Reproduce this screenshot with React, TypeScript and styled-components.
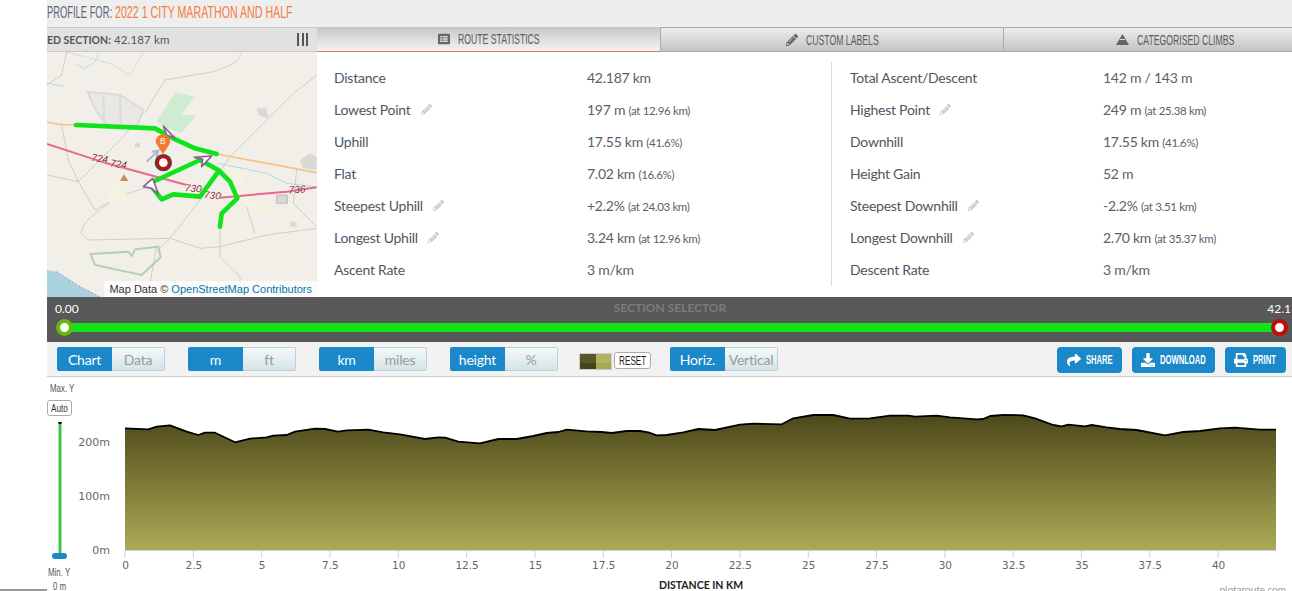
import React from 'react';
import styled, { createGlobalStyle } from 'styled-components';
import { FaListAlt, FaPencilAlt, FaShare, FaDownload, FaPrint } from 'react-icons/fa';

const GlobalStyle = createGlobalStyle`
  html, body {
    margin: 0;
    padding: 0;
    background: #fff;
    overflow: hidden;
  }
  * {
    box-sizing: border-box;
  }
`;

// no condensed family is installed, so the narrow headings are squeezed to their width
const Squeezed = styled.span<{ $w: number; $k: number }>`
  display: inline-block;
  width: ${({ $w }) => $w}px;
  flex: none;
  font-family: "Liberation Sans", sans-serif;
  white-space: nowrap;
  transform-origin: left center;
  transform: scaleX(${({ $k }) => $k});
`;

const Page = styled.div`
  display: flex;
  width: 1292px;
  height: 591px;
  overflow: hidden;
  font-family: Lato, sans-serif;
  color: #555;
`;

const Gutter = styled.div`
  width: 47px;
  flex: none;
  display: flex;
  flex-direction: column;
  justify-content: flex-end;
`;

const GutterRule = styled.div`
  height: 2px;
  background: #999;
`;

const Main = styled.div`
  flex: 1;
  min-width: 0;
  display: flex;
  flex-direction: column;
  overflow: hidden;
`;

const TitleBar = styled.div`
  height: 27px;
  flex: none;
  display: flex;
  align-items: center;
  gap: 3px;
  padding-bottom: 1px;
  background: #eee;
  font-size: 16px;
  color: #5c6470;
`;

const RouteName = styled.span`
  color: #f47c3c;
`;

const TopRow = styled.div`
  display: flex;
  height: 270px;
  flex: none;
`;

const MapPanel = styled.div`
  width: 270px;
  flex: none;
  display: flex;
  flex-direction: column;
`;

const MapHeader = styled.div`
  height: 25px;
  flex: none;
  display: flex;
  align-items: center;
  justify-content: space-between;
  padding-right: 9px;
  background: #e1e1e1;
  border-top: 1px solid #c8c8c8;
  border-bottom: 1px solid #c8c8c8;
  font-size: 11.5px;
  letter-spacing: 0.15px;
  white-space: nowrap;
`;

const MapHeaderKey = styled.b`
  font-size: 10.5px;
  font-weight: 700;
  letter-spacing: 0;
`;

const MapBars = styled.div`
  display: flex;
  gap: 2.5px;
`;

const MapBar = styled.span`
  width: 2px;
  height: 13px;
  background: #555;
`;

const MapCanvas = styled.div`
  position: relative;
  height: 245px;
  flex: none;
  overflow: hidden;
  background: #f2efe9;
  svg {
    display: block;
  }
`;

const Attribution = styled.div`
  position: absolute;
  right: 0;
  bottom: 0;
  height: 16px;
  padding: 0 5px;
  background: rgba(255, 255, 255, 0.75);
  font-family: "Liberation Sans", sans-serif;
  font-size: 11px;
  line-height: 16px;
  color: #333;
  white-space: nowrap;
`;

const OsmLink = styled.span`
  color: #0078a8;
`;

const RightPanel = styled.div`
  flex: 1;
  min-width: 0;
  display: flex;
  flex-direction: column;
`;

const Tabs = styled.div`
  height: 25px;
  flex: none;
  display: grid;
  grid-template-columns: repeat(3, 343px);
`;

const Tab = styled.div<{ $active?: boolean }>`
  display: flex;
  align-items: center;
  justify-content: center;
  gap: 8px;
  font-size: 14px;
  color: #5c5c5c;
  background: ${({ $active }) =>
    $active ? 'linear-gradient(#c6c6c6, #f4f4f4)' : 'linear-gradient(#ececec, #c4c4c4)'};
  border-top: ${({ $active }) => ($active ? 'none' : '1px solid #aaa')};
  border-left: ${({ $active }) => ($active ? 'none' : '1px solid #aaa')};
  border-bottom: ${({ $active }) => ($active ? '1px solid #e47a3a' : '1px solid #aaa')};
  svg {
    font-size: 12px;
    color: #666;
    flex: none;
  }
`;

const StatsBody = styled.div`
  height: 245px;
  flex: none;
  display: grid;
  grid-template-columns: 514px 1fr;
  padding-top: 10px;
`;

const StatsColumn = styled.div<{ $divided?: boolean }>`
  height: 224px;
  padding-left: ${({ $divided }) => ($divided ? '18px' : '17px')};
  border-left: ${({ $divided }) => ($divided ? '1px solid #ddd' : 'none')};
`;

const StatRow = styled.div`
  display: grid;
  grid-template-columns: 253px 1fr;
  height: 32px;
  padding-bottom: 2px;
  align-items: center;
  font-size: 14px;
  letter-spacing: -0.25px;
  white-space: nowrap;
`;

const StatLabel = styled.div`
  display: flex;
  align-items: center;
  gap: 10px;
  color: #4f5660;
  svg {
    font-size: 11px;
    color: #ccc;
  }
`;

const StatValue = styled.div`
  color: #5a5f68;
`;

const StatNote = styled.small`
  font-size: 11.5px;
  letter-spacing: -0.35px;
`;

const Selector = styled.div`
  height: 45px;
  flex: none;
  background: #585858;
  padding: 4px 13px 0 8px;
`;

const SelectorLabels = styled.div`
  display: grid;
  grid-template-columns: 1fr auto 1fr;
  height: 15px;
  align-items: center;
  font-size: 12px;
  color: #fff;
`;

const SelectorTitle = styled.div`
  font-size: 12px;
  font-weight: 700;
  color: #7c7c7c;
  transform: translate(3px, -1px);
`;

const SelectorEnd = styled.div`
  justify-self: end;
  margin-right: -12px;
  white-space: nowrap;
`;

const Track = styled.div`
  position: relative;
  height: 8.5px;
  margin: 7px 0 0 10px;
  background: #10e318;
`;

const Handle = styled.span<{ $end?: boolean }>`
  position: absolute;
  top: -4px;
  ${({ $end }) => ($end ? 'right: -9px;' : 'left: -9px;')}
  width: 17px;
  height: 17px;
  border-radius: 50%;
  background: #fff;
  border: 4px solid ${({ $end }) => ($end ? '#c20a0a' : '#69b80a')};
`;

const Toolbar = styled.div`
  height: 35px;
  flex: none;
  display: flex;
  align-items: flex-start;
  padding: 5px 6px 0 10px;
  background: #f2f2f2;
  border-bottom: 1px solid #ccc;
`;

const Toggle = styled.div<{ $gap?: number }>`
  display: flex;
  height: 24px;
  width: 108px;
  flex: none;
  margin-right: ${({ $gap }) => $gap ?? 23}px;
  border-radius: 2px;
  overflow: hidden;
  font-size: 14px;
  letter-spacing: -0.2px;
`;

const ToggleItem = styled.div<{ $on?: boolean }>`
  flex: ${({ $on }) => ($on ? '0 0 55px' : '1')};
  display: flex;
  align-items: center;
  justify-content: center;
  color: ${({ $on }) => ($on ? '#fff' : '#9a9a9a')};
  background: ${({ $on }) => ($on ? '#1b88c9' : 'linear-gradient(#f4f8f9, #d3e4e8)')};
  border: ${({ $on }) => ($on ? 'none' : '1px solid #b9d2da')};
  border-left: none;
`;

const Swatches = styled.div`
  display: flex;
  width: 33px;
  height: 17px;
  margin-top: 6px;
  flex: none;
  border: 1px solid #ccc;
`;

const Swatch = styled.span<{ $top: string; $bottom: string }>`
  flex: 1;
  background: linear-gradient(${({ $top }) => $top} 60%, ${({ $bottom }) => $bottom} 60%);
`;

const ResetButton = styled.div`
  width: 37px;
  height: 17px;
  margin: 5px 19px 0 2px;
  flex: none;
  display: flex;
  align-items: center;
  justify-content: center;
  background: #fff;
  border: 1px solid #aaa;
  border-radius: 3px;
  font-size: 13px;
  color: #222;
`;

const Actions = styled.div`
  margin-left: auto;
  display: flex;
  gap: 10px;
`;

const ActionButton = styled.div<{ $width: number }>`
  width: ${({ $width }) => $width}px;
  height: 26px;
  display: flex;
  align-items: center;
  justify-content: center;
  gap: 5px;
  border-radius: 4px;
  background: #1b88c9;
  color: #fff;
  font-size: 12.5px;
  font-weight: 700;
  svg {
    font-size: 14px;
    flex: none;
  }
`;

const ChartRow = styled.div`
  flex: 1;
  min-height: 0;
  display: flex;
  svg {
    display: block;
  }
`;

const YPanel = styled.div`
  width: 28px;
  flex: none;
  display: flex;
  flex-direction: column;
  align-items: center;
  font-size: 10.5px;
  line-height: 12px;
  color: #555;
  padding-top: 5px;
`;

const AutoButton = styled.div`
  width: 25px;
  height: 16px;
  margin: 6px 0 0 -3px;
  flex: none;
  display: flex;
  align-items: center;
  justify-content: center;
  background: #fff;
  border: 1px solid #aaa;
  border-radius: 3px;
  color: #333;
`;

const YTrack = styled.div`
  position: relative;
  width: 4px;
  height: 134px;
  margin: 6px 0 0 -3px;
  flex: none;
  background: #11df1b;
  border-left: 1px solid #ccc;
  border-right: 1px solid #ccc;
  border-top: 2px solid #000;
`;

const YKnob = styled.span`
  position: absolute;
  left: -7px;
  bottom: -3px;
  width: 15px;
  height: 6px;
  border-radius: 3px;
  background: #1b88c9;
`;

const YFoot = styled.div`
  margin: 10px 0 0 -3px;
  flex: none;
`;

const YFootValue = styled.div`
  margin: 2px 0 0 -3px;
  flex: none;
`;

const leftStats = [
  { label: 'Distance', value: '42.187 km' },
  { label: 'Lowest Point', value: '197 m', note: '(at 12.96 km)', edit: true },
  { label: 'Uphill', value: '17.55 km', note: '(41.6%)' },
  { label: 'Flat', value: '7.02 km', note: '(16.6%)' },
  { label: 'Steepest Uphill', value: '+2.2%', note: '(at 24.03 km)', edit: true },
  { label: 'Longest Uphill', value: '3.24 km', note: '(at 12.96 km)', edit: true },
  { label: 'Ascent Rate', value: '3 m/km' },
];

const rightStats = [
  { label: 'Total Ascent/Descent', value: '142 m / 143 m' },
  { label: 'Highest Point', value: '249 m', note: '(at 25.38 km)', edit: true },
  { label: 'Downhill', value: '17.55 km', note: '(41.6%)' },
  { label: 'Height Gain', value: '52 m' },
  { label: 'Steepest Downhill', value: '-2.2%', note: '(at 3.51 km)', edit: true },
  { label: 'Longest Downhill', value: '2.70 km', note: '(at 35.37 km)', edit: true },
  { label: 'Descent Rate', value: '3 m/km' },
];

const elevation = `125,428.3 148.3,429.3 156.7,426.7 170,425.3 186.7,431.7 198.3,435 205,432.7 215,432.7 235,442.3
 250,438.7 266.7,437.3 273.3,435.7 286.7,435 295,431.7 315,428.7 325,429 338,431.7 346.7,430.3 368.3,429.7 383.3,432.3
 400,434.3 425,439 438.3,437.3 445,437.7 458.3,441.7 480,443.3 498.3,439 516.7,439 533.3,436 546.7,433 558.3,432
 566.7,429.7 586.7,431.3 601.7,432 611.7,433 626.7,431 640,431 648.3,432.3 656.7,435.3 666.7,435 683.3,432.3 698.3,429
 715,430 740,424.7 753.3,423.7 781.7,424.3 793.3,418.3 813.3,415 833.3,415 850,418.6 870,418.3 890,415.7 908.3,415.7
 915,416.7 936.7,415.7 950,417.3 976.7,419.3 983.3,419 990,416 1003.3,415 1023.3,415.3 1035,418.3 1053.3,425
 1061.7,426.3 1068.3,424.7 1085,426.3 1091.7,425 1106.7,427.3 1120,429 1136.7,430 1165,435.3 1183.3,432 1200,431
 1220,428.3 1235,427.7 1260,429.7 1276,429.7`;

const ticks = ['0', '2.5', '5', '7.5', '10', '12.5', '15', '17.5', '20', '22.5', '25', '27.5', '30', '32.5', '35', '37.5', '40'];

const ElevationChart = () => (
  <svg width="1217" height="214" viewBox="75 377 1217 214">
    <defs>
      <linearGradient id="elev" x1="0" y1="415" x2="0" y2="550" gradientUnits="userSpaceOnUse">
        <stop offset="0" stopColor="#4d481a" />
        <stop offset="1" stopColor="#abaa55" />
      </linearGradient>
    </defs>
    <polygon points={`125,550 ${elevation} 1276,550`} fill="url(#elev)" />
    <polyline points={elevation} fill="none" stroke="#000" strokeWidth="1.8" strokeLinejoin="round" />
    <line x1="125" y1="550.5" x2="1276" y2="550.5" stroke="#c3d2e6" />
    <g fontFamily="DejaVu Sans, sans-serif" fontSize="11" fill="#666" textAnchor="end">
      <text x="110" y="446">200m</text>
      <text x="110" y="500">100m</text>
      <text x="110" y="554">0m</text>
    </g>
    {ticks.map((t, i) => {
      const x = 125 + i * 68.32;
      return (
        <g key={t}>
          <line x1={x} y1="550" x2={x} y2="558" stroke="#c3d2e6" />
          <text
            x={x + 0.5}
            y="569"
            fontFamily="DejaVu Sans, sans-serif"
            fontSize="10.5"
            fill="#666"
            textAnchor="middle"
          >
            {t}
          </text>
        </g>
      );
    })}
    <text x="701" y="589" fontFamily="Lato, sans-serif" fontSize="10.5" fontWeight="700" fill="#222" textAnchor="middle">
      DISTANCE IN KM
    </text>
    <text x="1286" y="592.5" fontFamily="Lato, sans-serif" fontSize="10" fill="#999" textAnchor="end">
      plotaroute.com
    </text>
  </svg>
);

// coordinates are page pixels x3, taken off the reference crop
const RouteMap = () => (
  <svg width="270" height="245" viewBox="141 156 810 735">
    <g fill="none" stroke="#c9c7c2" strokeWidth="2.5">
      <path d="M200 156 L185 225 L141 255" />
      <path d="M430 156 L390 225 L330 190 L200 156" strokeWidth="1.5" />
      <path d="M720 160 Q730 185 640 215 L495 240 L440 330 L360 420 L235 545 L285 630 L355 590 L440 562" />
      <path d="M185 375 L205 480 L235 545" />
      <path d="M950 225 Q920 250 880 280 L770 390 L690 470 L600 600 L510 715" />
      <path d="M360 590 Q240 660 245 700 L265 720 L510 715 L600 745 L660 740 L800 705 L950 685" />
      <path d="M660 680 L660 770 L720 830 L720 891" />
      <path d="M740 620 L765 700 M890 510 L880 610 L950 680" />
      <path d="M141 525 L235 545" />
      <path d="M470 740 L450 850 M510 715 L480 745" />
    </g>
    <path d="M295 160 Q295 190 250 205 L225 190 M141 250 L190 258 M655 490 L800 520 L860 550 L950 560" fill="none" stroke="#9ecae0" strokeWidth="2" />
    <path d="M141 810 L170 815 L240 860 L300 891 L141 891 Z" fill="#aad3df" />
    <path d="M170 815 L240 860 L300 891" fill="none" stroke="#b78fc0" strokeWidth="3" strokeDasharray="6 5" />
    <g fill="#d9d8d4">
      <path d="M770 325 L800 325 L805 355 L775 345 Z" />
      <path d="M900 480 L930 460 L950 470 L950 510 L910 505 Z" />
      <path d="M830 585 L862 585 L862 610 L830 610 Z" stroke="#aaa" strokeWidth="2" />
      <path d="M405 430 L420 430 L420 442 L405 442 Z" />
      <path d="M870 665 L890 665 L890 680 L870 680 Z" />
    </g>
    <g fill="#f4f3e2">
      <path d="M330 550 L380 545 L375 600 L325 610 Z" />
      <path d="M670 500 L745 510 L720 570 L815 630 L770 640 L700 590 Z" />
    </g>
    <path d="M525 277 L582 290 L545 345 L590 345 L545 400 L500 385 L470 365 Z" fill="#d0ecd0" />
    <path d="M262 275 L360 285 L430 330 L410 380 L325 378 L290 335 Z M310 290 L312 370 M360 288 L362 378" fill="#e9e8e5" stroke="#dcdbd8" strokeWidth="6" />
    <path d="M272 762 L385 755 L395 768 L405 748 L475 740 L482 772 L425 825 L285 795 Z" fill="none" stroke="#b6d0ae" strokeWidth="6" />
    <path d="M141 365 Q170 375 225 375 M650 462 L950 518" fill="none" stroke="#f6c182" strokeWidth="5" />
    <path d="M141 432 L320 490 L560 555 M660 593 L860 575 L950 562" fill="none" stroke="#e8688e" strokeWidth="6" />
    <path d="M372 523 L385 543 L360 543 Z" fill="#c98a4c" />
    <g fontFamily="Liberation Sans, sans-serif" fontStyle="italic" fontSize="30" fill="#8d1f33" stroke="#fff" strokeWidth="1" paintOrder="stroke">
      <text x="274" y="486" transform="rotate(8 300 478)">724</text>
      <text x="330" y="502" transform="rotate(8 355 495)">724</text>
      <text x="555" y="575" transform="rotate(5 580 565)">730</text>
      <text x="612" y="596" transform="rotate(5 635 588)">730</text>
      <text x="866" y="579" transform="rotate(-3 890 570)">736</text>
    </g>
    <g fill="none" stroke="#0ee31c" strokeWidth="14" strokeLinecap="round" strokeLinejoin="round">
      <path d="M228 375 L465 385 L520 415 L585 445 L650 462" />
      <path d="M445 552 L600 480 L655 510 L690 545 L712 595 L665 640 L660 680" />
      <path d="M655 515 L600 590 L520 583 L485 598 L455 560" />
    </g>
    <g fill="#fff" stroke="#8b5f94" strokeWidth="5" strokeLinejoin="round">
      <path d="M490 378 L525 415 L500 405 Z" />
      <path d="M583 472 L635 468 L605 500 L608 478 Z" />
      <path d="M430 560 L458 535 L475 582 L455 565 Z" />
    </g>
    <path d="M440 485 L475 452 M455 455 L475 452 L470 472" fill="none" stroke="#b3b3cf" strokeWidth="6" />
    <path d="M489 462 Q467 430 467 425 A22 22 0 1 1 511 425 Q511 430 489 462 Z" fill="#f47b2e" />
    <text x="489" y="433" fontFamily="Liberation Sans, sans-serif" fontSize="26" fill="#fff" textAnchor="middle">B</text>
    <circle cx="490" cy="488" r="26" fill="#444" />
    <circle cx="490" cy="488" r="21" fill="#c60f0f" />
    <circle cx="490" cy="488" r="13" fill="#fff" />
  </svg>
);

const Climb = () => (
  <svg width="13" height="11" viewBox="0 0 13 11">
    <path d="M6.5 0 L13 11 L0 11 Z" fill="#666" />
    <path d="M4 5.5 L9 5.5" stroke="#ddd" strokeWidth="1" />
  </svg>
);

const StatList = ({ rows, divided }: { rows: typeof leftStats; divided?: boolean }) => (
  <StatsColumn $divided={divided}>
    {rows.map((row) => (
      <StatRow key={row.label}>
        <StatLabel>
          {row.label}
          {row.edit && <FaPencilAlt />}
        </StatLabel>
        <StatValue>
          {row.value} {row.note && <StatNote>{row.note}</StatNote>}
        </StatValue>
      </StatRow>
    ))}
  </StatsColumn>
);

const Switch = ({ on, off, gap }: { on: string; off: string; gap?: number }) => (
  <Toggle $gap={gap}>
    <ToggleItem $on>{on}</ToggleItem>
    <ToggleItem>{off}</ToggleItem>
  </Toggle>
);

const App: React.FC = () => (
  <Page>
    <GlobalStyle />
    <Gutter>
      <GutterRule />
    </Gutter>
    <Main>
      <TitleBar>
        <Squeezed $w={65} $k={0.585}>PROFILE FOR:</Squeezed>
        <Squeezed $w={178} $k={0.665}>
          <RouteName>2022 1 CITY MARATHON AND HALF</RouteName>
        </Squeezed>
      </TitleBar>
      <TopRow>
        <MapPanel>
          <MapHeader>
            <span>
              <MapHeaderKey>ED SECTION:</MapHeaderKey> 42.187 km
            </span>
            <MapBars>
              <MapBar />
              <MapBar />
              <MapBar />
            </MapBars>
          </MapHeader>
          <MapCanvas>
            <RouteMap />
            <Attribution>
              Map Data © <OsmLink>OpenStreetMap Contributors</OsmLink>
            </Attribution>
          </MapCanvas>
        </MapPanel>
        <RightPanel>
          <Tabs>
            <Tab $active>
              <FaListAlt />
              <Squeezed $w={82} $k={0.62}>ROUTE STATISTICS</Squeezed>
            </Tab>
            <Tab>
              <FaPencilAlt />
              <Squeezed $w={73} $k={0.62}>CUSTOM LABELS</Squeezed>
            </Tab>
            <Tab>
              <Climb />
              <Squeezed $w={97} $k={0.62}>CATEGORISED CLIMBS</Squeezed>
            </Tab>
          </Tabs>
          <StatsBody>
            <StatList rows={leftStats} />
            <StatList rows={rightStats} divided />
          </StatsBody>
        </RightPanel>
      </TopRow>
      <Selector>
        <SelectorLabels>
          <div>0.00</div>
          <SelectorTitle>SECTION SELECTOR</SelectorTitle>
          <SelectorEnd>42.1</SelectorEnd>
        </SelectorLabels>
        <Track>
          <Handle />
          <Handle $end />
        </Track>
      </Selector>
      <Toolbar>
        <Switch on="Chart" off="Data" />
        <Switch on="m" off="ft" />
        <Switch on="km" off="miles" />
        <Switch on="height" off="%" gap={21} />
        <Swatches>
          <Swatch $top="#58562b" $bottom="#45431a" />
          <Swatch $top="#b5b262" $bottom="#a9a852" />
        </Swatches>
        <ResetButton>
          <Squeezed $w={27} $k={0.63}>RESET</Squeezed>
        </ResetButton>
        <Switch on="Horiz." off="Vertical" gap={0} />
        <Actions>
          <ActionButton $width={65}>
            <FaShare />
            <Squeezed $w={27} $k={0.61}>SHARE</Squeezed>
          </ActionButton>
          <ActionButton $width={83}>
            <FaDownload />
            <Squeezed $w={46} $k={0.61}>DOWNLOAD</Squeezed>
          </ActionButton>
          <ActionButton $width={61}>
            <FaPrint />
            <Squeezed $w={24} $k={0.61}>PRINT</Squeezed>
          </ActionButton>
        </Actions>
      </Toolbar>
      <ChartRow>
        <YPanel>
          <Squeezed $w={23} $k={0.75}>Max. Y</Squeezed>
          <AutoButton>
            <Squeezed $w={17} $k={0.78}>Auto</Squeezed>
          </AutoButton>
          <YTrack>
            <YKnob />
          </YTrack>
          <YFoot>
            <Squeezed $w={23} $k={0.75}>Min. Y</Squeezed>
          </YFoot>
          <YFootValue>
            <Squeezed $w={14} $k={0.75}>0 m</Squeezed>
          </YFootValue>
        </YPanel>
        <ElevationChart />
      </ChartRow>
    </Main>
  </Page>
);

export default App;
